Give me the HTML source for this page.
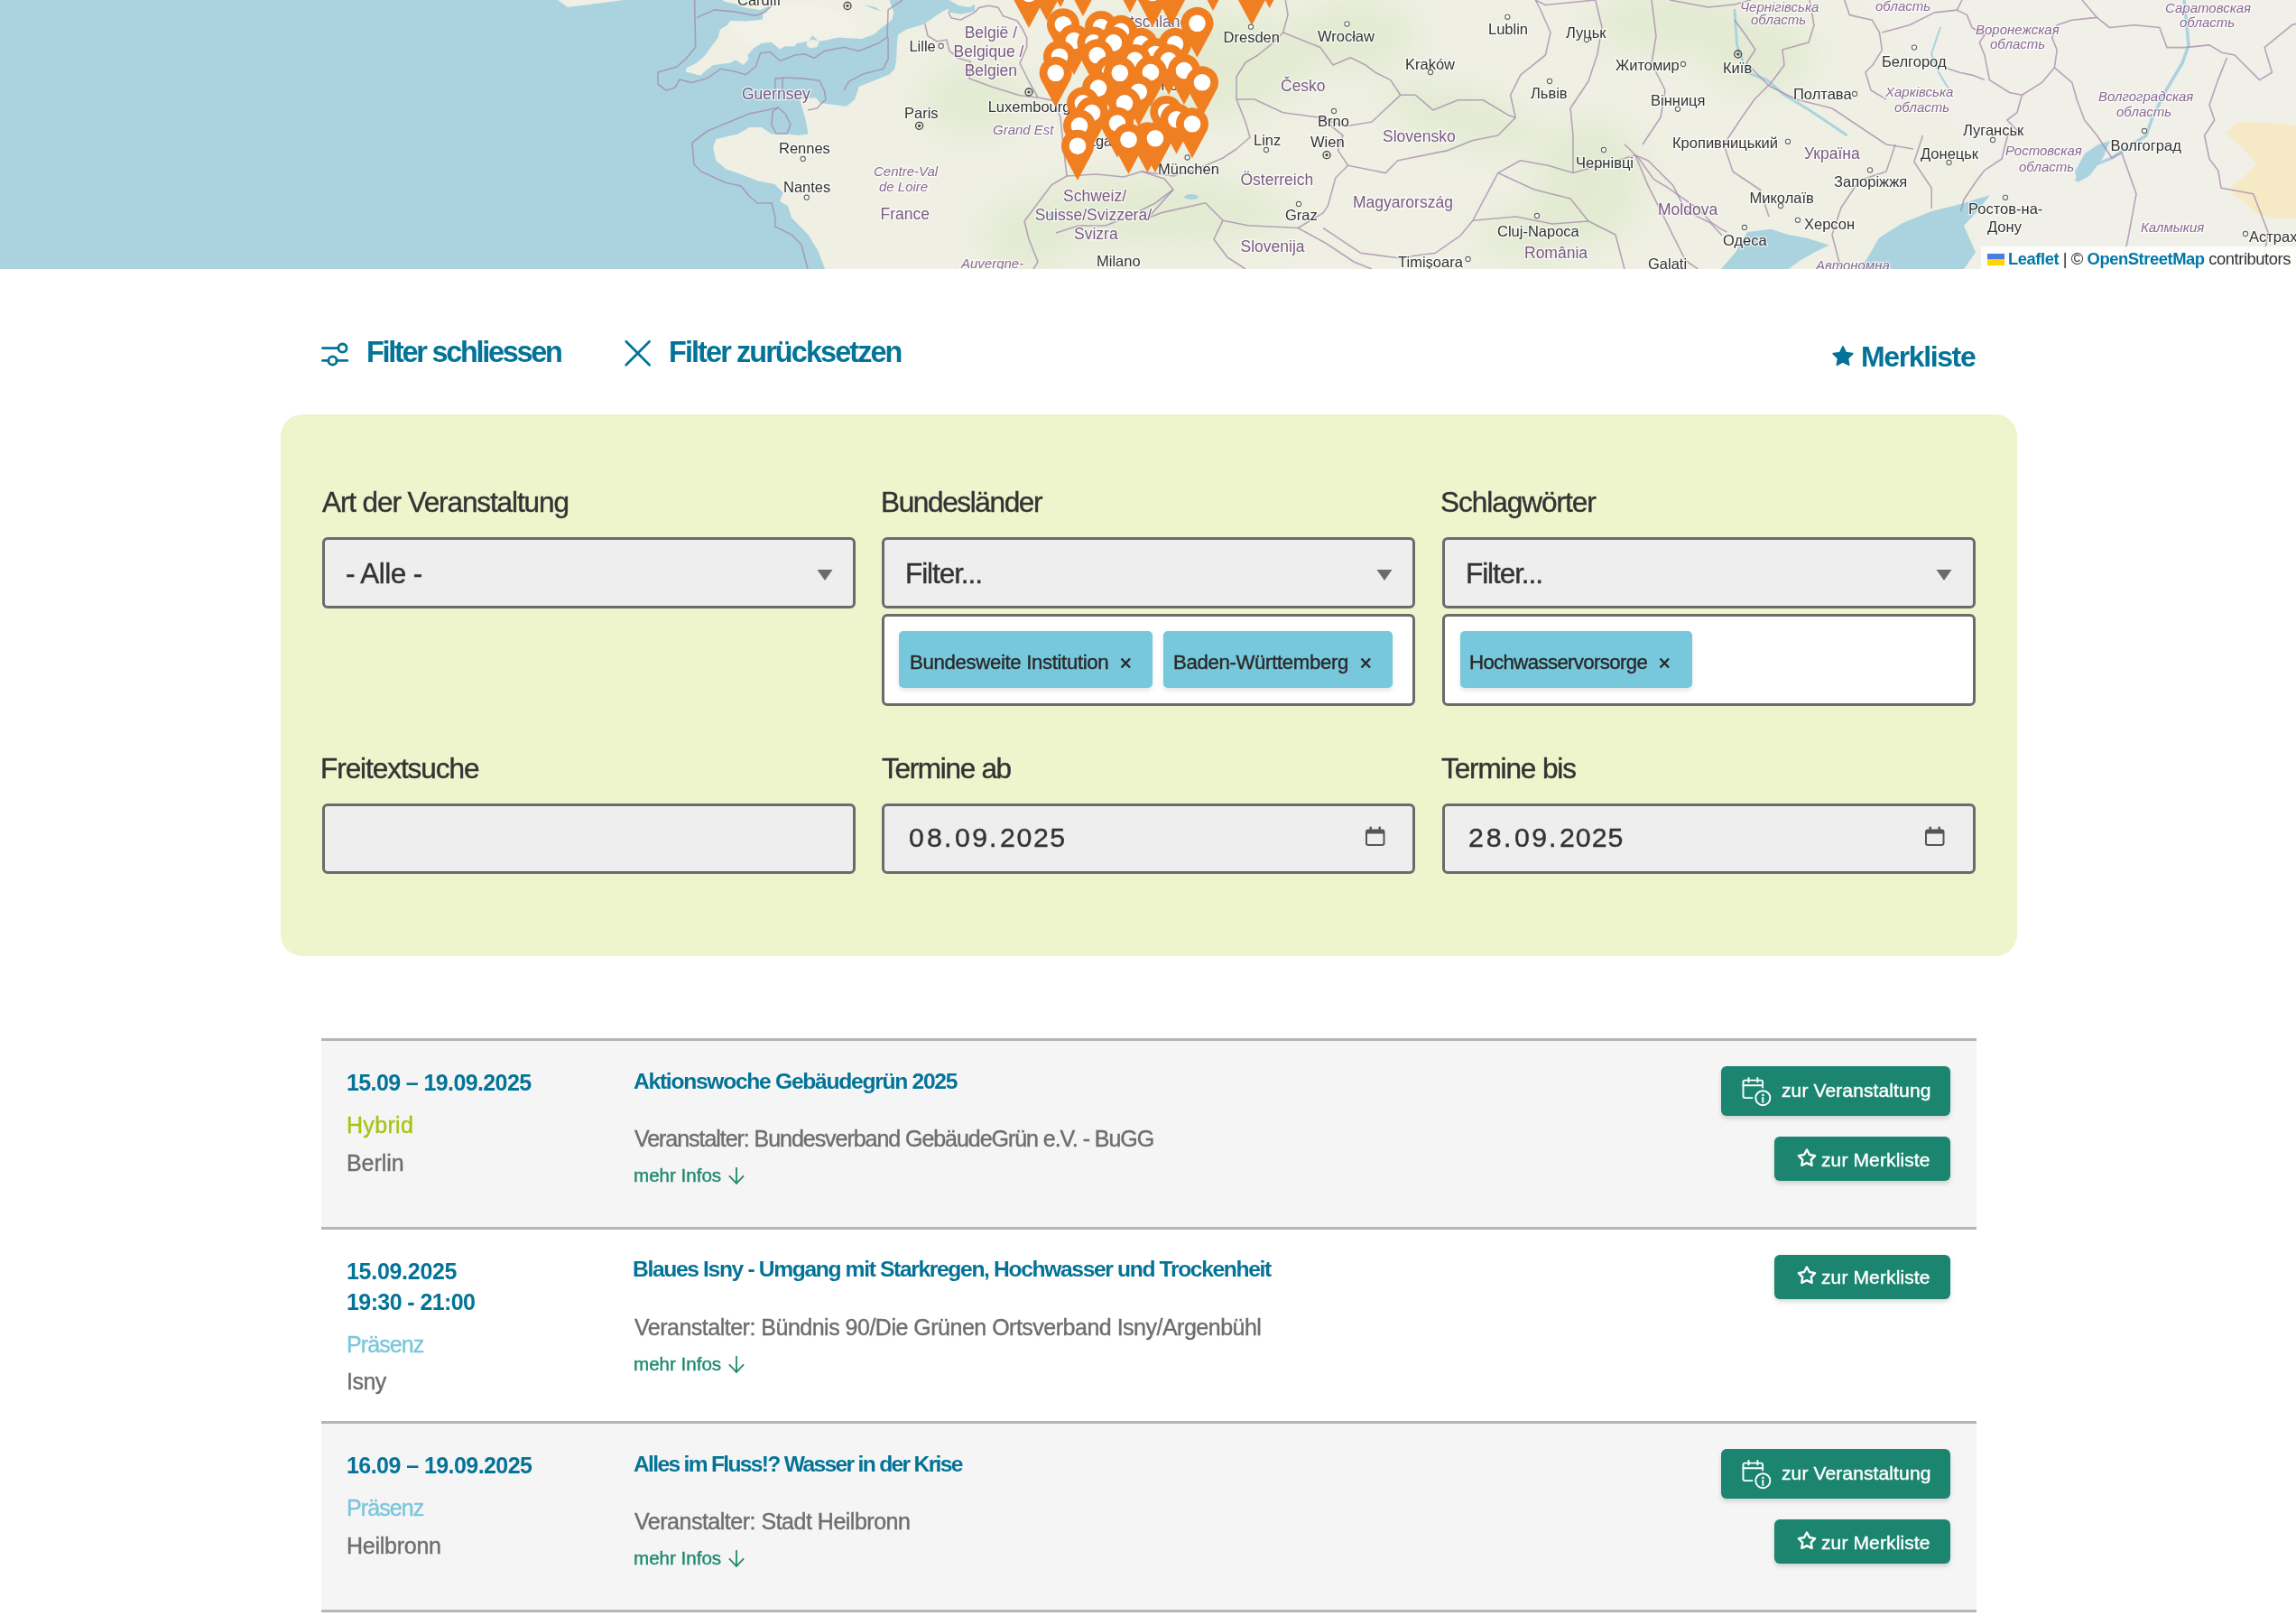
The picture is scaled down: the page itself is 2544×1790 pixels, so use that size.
<!DOCTYPE html>
<html lang="de"><head><meta charset="utf-8"><title>Veranstaltungen</title>
<style>
html,body{margin:0;padding:0}
body{width:2544px;height:1790px;overflow:hidden;background:#ffffff;position:relative;font-family:"Liberation Sans",sans-serif}
.t{position:absolute;white-space:pre;will-change:transform}
.box{position:absolute;box-sizing:border-box}
.inp{background:#eeeeee;border:3px solid #6b6b6b;border-radius:6px}
.tag{background:#77c8dc;border-radius:5px;box-shadow:0 3px 5px rgba(0,0,0,0.10)}
.btn{background:#1b8570;border-radius:6px;box-shadow:0 3px 5px rgba(0,0,0,0.15)}
</style></head><body>
<svg width="2544" height="298" viewBox="0 0 2544 298" style="position:absolute;left:0;top:0;display:block">
<rect width="2544" height="298" fill="#eff0e3"/>
<polygon points="2060.0,0.0 2544.0,0.0 2544.0,298.0 2170.0,298.0 2190.0,270.0 2180.0,240.0 2205.0,216.0 2170.0,150.0 2150.0,100.0 2100.0,40.0" fill="#f0efe8"/>
<defs><filter id="bl" x="-50%" y="-50%" width="200%" height="200%"><feGaussianBlur stdDeviation="18"/></filter></defs>
<g filter="url(#bl)" fill="#d9e6c4" opacity="0.55">
<ellipse cx="1330" cy="70" rx="120" ry="60"/>
<ellipse cx="1280" cy="235" rx="150" ry="40"/>
<ellipse cx="1620" cy="130" rx="90" ry="30" transform="rotate(15 1620 130)"/>
<ellipse cx="1760" cy="200" rx="60" ry="70"/>
<ellipse cx="1850" cy="25" rx="90" ry="35"/>
<ellipse cx="1500" cy="40" rx="70" ry="40"/>
<ellipse cx="1950" cy="60" rx="60" ry="40"/>
<ellipse cx="1080" cy="110" rx="60" ry="40"/>
<ellipse cx="1140" cy="260" rx="50" ry="40"/>
<ellipse cx="1700" cy="260" rx="60" ry="30"/>
</g>
<ellipse cx="880" cy="30" rx="70" ry="25" fill="#f2f1e8" opacity="0.9"/>
<polygon points="2466.5,147.0 2480.0,134.7 2505.0,136.0 2529.6,137.0 2544.0,139.6 2544.0,242.3 2517.3,242.3 2498.7,236.0 2486.3,223.8 2474.0,215.0 2471.5,206.4 2486.3,196.5 2500.0,182.0 2486.3,164.4 2474.0,155.7" fill="#f5e9c6"/>
<polygon points="0.0,0.0 618.0,0.0 629.0,8.0 660.0,4.0 691.0,0.0 800.0,0.0 804.4,2.2 815.3,4.4 826.2,8.7 842.6,10.9 854.5,5.4 857.0,3.0 855.6,4.4 845.8,15.2 844.7,21.8 826.2,23.4 808.8,22.9 806.6,27.2 797.9,32.7 795.7,41.4 786.0,54.4 781.6,61.0 771.8,69.7 760.9,75.1 759.8,79.5 764.2,80.6 776.1,83.8 780.5,79.5 790.3,71.9 808.8,69.7 815.3,66.4 824.0,71.9 829.5,65.3 828.4,61.0 835.0,53.4 843.6,47.9 854.5,46.8 864.3,54.4 869.8,51.2 880.7,51.2 882.8,47.9 895.9,45.7 900.3,39.2 906.8,45.7 915.5,44.6 928.6,41.4 954.7,43.1 968.2,38.3 975.8,31.6 988.3,22.0 990.2,13.4 986.4,2.9 985.4,0.0 1080.0,0.0 1080.0,12.5 1064.5,15.7 1051.0,13.6 1050.6,9.6 1042.9,13.4 1023.7,26.8 1004.6,32.6 995.0,38.3 994.0,47.9 993.1,67.1 991.2,76.7 985.4,82.4 971.0,88.2 951.9,95.8 947.1,110.2 937.5,117.9 908.7,114.0 904.0,108.3 886.0,109.5 892.0,130.0 895.6,148.5 884.5,150.0 873.0,148.5 855.0,148.5 843.6,141.0 830.6,141.0 817.7,148.5 793.5,154.0 790.0,163.0 793.5,178.0 804.7,187.5 821.0,193.0 840.0,200.5 858.5,204.0 867.8,213.5 864.0,223.0 873.0,228.0 877.0,241.0 895.6,260.0 906.8,278.5 914.0,298.0 0.0,298.0" fill="#aad3df"/>
<polygon points="893.7,47.0 900.0,43.6 907.9,46.0 905.0,52.0 898.0,53.4 894.0,51.0" fill="#eff0e3"/>
<polygon points="1052.0,0.0 1062.0,6.0 1075.0,8.0 1082.0,3.0 1083.0,0.0" fill="#eff0e3"/>
<polygon points="957.0,5.0 970.0,8.0 976.0,12.0 968.0,10.0" fill="#aad3df"/>
<polygon points="1907.0,298.0 1923.0,279.6 1936.0,257.0 1962.0,253.7 1981.5,260.0 2001.0,263.4 2027.0,271.5 2010.6,279.6 1994.0,289.0 1981.5,298.0" fill="#aad3df"/>
<polygon points="2069.0,286.0 2082.0,263.4 2108.0,247.0 2140.0,234.0 2172.6,226.0 2205.0,216.0 2189.0,236.0 2176.0,250.0 2189.0,279.6 2176.0,298.0 2085.0,298.0 2060.0,298.0" fill="#aad3df"/>
<path d="M2300,200 L2315,185 L2340,175 L2378,150 L2385,130 L2400,100 L2418,70 L2425,50 L2420,0" stroke="#aad3df" stroke-width="3.5" fill="none"/>
<polygon points="2299,190 2310,170 2325,160 2338,156 2330,175 2315,195 2302,202" fill="#aad3df"/>
<path d="M2150,30 L2140,60 L2148,80 L2160,100" stroke="#aad3df" stroke-width="2" fill="none"/>
<path d="M1921.9,10 L1924.6,50 L1935.7,80.3 L1957.9,88.6 L1977.3,105.3 L2005,121.9 L2046.5,150" stroke="#aad3df" stroke-width="3" fill="none"/>
<ellipse cx="1320" cy="218" rx="8" ry="3" fill="#aad3df"/><ellipse cx="1170" cy="238" rx="10" ry="3" fill="#aad3df"/>
<polyline points="1024.8,26.0 1028.0,39.7 1038.4,46.0 1048.8,44.0 1052.0,56.4 1062.4,64.8 1075.0,68.0 1074.0,87.0 1100.0,96.5 1130.0,105.8 1150.0,108.0 1167.0,111.4 1175.0,130.0 1178.0,160.0 1182.0,195.0" fill="none" stroke="#a58aab" stroke-width="1.6" stroke-opacity="0.75" stroke-linejoin="round"/>
<polyline points="1051.0,13.6 1054.0,20.0 1064.5,22.0 1080.0,13.6 1085.0,8.4 1096.0,6.3 1106.0,8.4 1111.6,17.8 1127.0,23.0 1132.5,31.4 1137.7,41.8 1137.7,52.3 1130.0,70.0 1140.0,90.0 1150.0,108.0" fill="none" stroke="#a58aab" stroke-width="1.6" stroke-opacity="0.75" stroke-linejoin="round"/>
<polyline points="1182.0,195.0 1165.0,205.0 1150.0,225.0 1135.0,245.0 1140.0,265.0 1150.0,290.0 1145.0,298.0" fill="none" stroke="#a58aab" stroke-width="1.6" stroke-opacity="0.75" stroke-linejoin="round"/>
<polyline points="1182.0,195.0 1215.0,193.0 1245.0,196.0 1265.0,190.0 1290.0,198.0 1300.0,210.0 1280.0,225.0 1250.0,240.0 1225.0,250.0 1195.0,250.0 1170.0,258.0" fill="none" stroke="#a58aab" stroke-width="1.6" stroke-opacity="0.75" stroke-linejoin="round"/>
<polyline points="1265.0,190.0 1300.0,195.0 1325.0,188.0 1355.0,175.0 1370.0,165.0 1385.0,152.0 1380.0,135.0 1370.0,110.0 1390.0,110.0 1421.6,124.7" fill="none" stroke="#a58aab" stroke-width="1.6" stroke-opacity="0.75" stroke-linejoin="round"/>
<polyline points="1272.0,241.4 1285.9,235.9 1335.7,224.8 1355.0,244.2 1382.8,249.7 1438.2,252.5 1466.0,235.9 1471.5,227.6 1479.8,197.0 1493.6,183.2 1482.5,166.6 1488.0,150.0 1463.0,130.2" fill="none" stroke="#a58aab" stroke-width="1.6" stroke-opacity="0.75" stroke-linejoin="round"/>
<polyline points="1300.0,210.0 1272.0,241.4" fill="none" stroke="#a58aab" stroke-width="1.6" stroke-opacity="0.75" stroke-linejoin="round"/>
<polyline points="1424.3,0.0 1427.0,16.6 1421.6,36.0 1435.4,41.6 1463.0,52.6 1477.0,72.0 1496.3,63.7 1513.0,72.0 1524.0,80.3 1540.7,88.6 1551.7,105.3 1568.4,105.3 1587.8,121.9 1615.5,110.8 1643.2,110.8 1670.9,127.4 1679.2,130.2" fill="none" stroke="#a58aab" stroke-width="1.6" stroke-opacity="0.75" stroke-linejoin="round"/>
<polyline points="1421.6,36.0 1407.7,49.9 1393.9,61.0 1380.0,69.3 1370.0,85.0 1370.0,110.0" fill="none" stroke="#a58aab" stroke-width="1.6" stroke-opacity="0.75" stroke-linejoin="round"/>
<polyline points="1421.6,124.7 1463.0,130.2 1490.0,140.0 1520.0,135.0 1551.7,105.3" fill="none" stroke="#a58aab" stroke-width="1.6" stroke-opacity="0.75" stroke-linejoin="round"/>
<polyline points="1679.2,130.2 1673.6,105.3 1684.7,83.1 1712.4,61.0 1718.0,36.0 1707.0,11.0 1701.3,0.0" fill="none" stroke="#a58aab" stroke-width="1.6" stroke-opacity="0.75" stroke-linejoin="round"/>
<polyline points="1701.3,0.0 1712.4,5.5 1767.8,0.0" fill="none" stroke="#a58aab" stroke-width="1.6" stroke-opacity="0.75" stroke-linejoin="round"/>
<polyline points="1850.0,0.0 1892.5,8.0 1922.0,5.0 1940.0,0.0" fill="none" stroke="#a58aab" stroke-width="1.6" stroke-opacity="0.75" stroke-linejoin="round"/>
<polyline points="1466.0,252.5 1507.5,280.2 1549.0,285.7 1590.6,280.2 1618.3,260.8 1632.0,244.2 1659.8,191.6 1684.7,177.7 1715.2,183.2 1743.0,191.6" fill="none" stroke="#a58aab" stroke-width="1.6" stroke-opacity="0.75" stroke-linejoin="round"/>
<polyline points="1493.6,183.2 1535.2,191.6 1549.0,177.7 1604.4,166.6 1632.0,155.5 1659.8,150.0 1679.2,130.2" fill="none" stroke="#a58aab" stroke-width="1.6" stroke-opacity="0.75" stroke-linejoin="round"/>
<polyline points="1743.0,191.6 1812.0,172.0 1826.0,177.7 1853.7,205.4 1867.6,233.1 1895.3,247.0 1908.0,260.8" fill="none" stroke="#a58aab" stroke-width="1.6" stroke-opacity="0.75" stroke-linejoin="round"/>
<polyline points="1800.0,159.7 1816.2,176.0 1832.4,198.6 1848.6,208.3 1881.0,231.0 1897.2,247.2 1907.0,253.7 1913.4,257.0" fill="none" stroke="#a58aab" stroke-width="1.6" stroke-opacity="0.75" stroke-linejoin="round"/>
<polyline points="1812.0,172.0 1826.0,205.4 1840.0,233.1 1853.7,260.8 1867.6,288.5 1881.4,298.0" fill="none" stroke="#a58aab" stroke-width="1.6" stroke-opacity="0.75" stroke-linejoin="round"/>
<polyline points="1632.0,244.2 1680.0,240.0 1720.0,248.0 1760.0,245.0 1790.0,260.0 1800.0,298.0" fill="none" stroke="#a58aab" stroke-width="1.6" stroke-opacity="0.75" stroke-linejoin="round"/>
<polyline points="1659.8,191.6 1700.0,210.0 1740.0,220.0 1760.0,245.0" fill="none" stroke="#a58aab" stroke-width="1.6" stroke-opacity="0.75" stroke-linejoin="round"/>
<polyline points="1355.0,244.2 1345.0,265.0 1360.0,285.0 1380.0,298.0" fill="none" stroke="#a58aab" stroke-width="1.6" stroke-opacity="0.75" stroke-linejoin="round"/>
<polyline points="1438.2,252.5 1470.0,270.0 1500.0,290.0 1520.0,298.0" fill="none" stroke="#a58aab" stroke-width="1.6" stroke-opacity="0.75" stroke-linejoin="round"/>
<polyline points="1767.8,0.0 1775.0,30.0 1770.0,60.0 1760.0,90.0 1740.0,120.0 1743.0,150.0 1743.0,191.6" fill="none" stroke="#a58aab" stroke-width="1.6" stroke-opacity="0.75" stroke-linejoin="round"/>
<polyline points="1830.0,0.0 1835.0,40.0 1830.0,70.0 1845.0,100.0 1840.0,130.0 1820.0,160.0" fill="none" stroke="#a58aab" stroke-width="1.6" stroke-opacity="0.75" stroke-linejoin="round"/>
<polyline points="1921.9,22.0 1935.0,40.0 1945.0,55.0 1935.0,70.0 1960.0,95.0 1990.0,110.0 2030.0,120.0 2060.0,140.0 2090.0,160.0 2120.0,165.0" fill="none" stroke="#a58aab" stroke-width="1.6" stroke-opacity="0.75" stroke-linejoin="round"/>
<polyline points="2005.0,0.0 2010.0,28.0 2004.0,47.0 1975.0,55.0 1977.0,72.0 1963.0,91.0 1944.0,110.0 1930.0,130.0 1910.0,160.0 1920.0,190.0 1950.0,210.0 1960.0,240.0" fill="none" stroke="#a58aab" stroke-width="1.6" stroke-opacity="0.75" stroke-linejoin="round"/>
<polyline points="2100.0,160.0 2090.0,190.0 2060.0,200.0 2040.0,230.0 2030.0,260.0 2040.0,299.0" fill="none" stroke="#a58aab" stroke-width="1.6" stroke-opacity="0.75" stroke-linejoin="round"/>
<polyline points="2043.7,0.0 2049.3,16.6 2074.2,22.2 2082.5,36.0 2085.3,55.4 2075.0,72.0 2067.0,80.0 2073.0,100.0 2090.0,110.0" fill="none" stroke="#a58aab" stroke-width="1.6" stroke-opacity="0.75" stroke-linejoin="round"/>
<polyline points="2085.3,36.0 2115.8,27.7 2143.5,13.9 2168.4,11.1 2179.5,16.6 2185.0,30.5 2198.9,38.8 2193.3,47.1 2198.9,61.0 2204.4,88.6 2226.6,102.5 2240.4,105.3 2234.9,124.7 2223.8,133.0 2240.4,149.6 2224.5,150.0 2218.0,176.0 2198.6,188.9 2188.9,201.8 2175.9,221.3 2172.6,234.3" fill="none" stroke="#a58aab" stroke-width="1.6" stroke-opacity="0.75" stroke-linejoin="round"/>
<polyline points="2154.5,74.8 2171.2,80.3 2185.0,83.1 2198.9,88.6" fill="none" stroke="#a58aab" stroke-width="1.6" stroke-opacity="0.75" stroke-linejoin="round"/>
<polyline points="2130.5,150.0 2120.8,179.2 2140.2,208.3 2140.2,231.0" fill="none" stroke="#a58aab" stroke-width="1.6" stroke-opacity="0.75" stroke-linejoin="round"/>
<polyline points="2168.4,11.0 2174.0,0.0" fill="none" stroke="#a58aab" stroke-width="1.6" stroke-opacity="0.75" stroke-linejoin="round"/>
<polyline points="2273.6,41.6 2279.2,55.4 2276.4,74.8 2262.5,91.4 2240.4,105.3" fill="none" stroke="#a58aab" stroke-width="1.6" stroke-opacity="0.75" stroke-linejoin="round"/>
<polyline points="2279.2,27.7 2295.8,22.2 2323.5,19.4 2337.4,30.5 2365.0,27.7 2392.8,30.5 2401.0,52.6 2420.5,52.6 2448.0,49.9 2462.0,58.2 2476.0,61.0 2503.6,88.6 2517.4,80.3 2509.1,52.6 2539.6,27.7 2544.0,26.3" fill="none" stroke="#a58aab" stroke-width="1.6" stroke-opacity="0.75" stroke-linejoin="round"/>
<polyline points="2276.4,74.8 2295.8,91.4 2301.3,110.8 2309.7,133.0 2323.5,150.0 2340.0,175.0 2350.9,169.4 2367.0,214.8 2357.4,266.7 2350.0,298.0" fill="none" stroke="#a58aab" stroke-width="1.6" stroke-opacity="0.75" stroke-linejoin="round"/>
<polyline points="2467.5,63.7 2456.5,91.4 2448.0,116.3 2453.7,133.0 2442.6,150.0 2448.0,176.0 2457.8,188.9 2461.0,208.3 2496.7,214.8 2513.0,257.0 2506.4,298.0" fill="none" stroke="#a58aab" stroke-width="1.6" stroke-opacity="0.75" stroke-linejoin="round"/>
<polyline points="2307.0,0.0 2323.5,19.4" fill="none" stroke="#a58aab" stroke-width="1.6" stroke-opacity="0.75" stroke-linejoin="round"/>
<polyline points="2279.2,27.7 2273.6,41.6" fill="none" stroke="#a58aab" stroke-width="1.6" stroke-opacity="0.75" stroke-linejoin="round"/>
<polyline points="769.6,0.0 770.7,52.3 760.9,64.2 750.0,74.0 729.0,80.0 729.0,93.0 738.0,100.0 748.0,97.0 753.0,88.0 766.3,91.5 782.7,87.1 799.0,76.2 815.3,79.5 826.2,82.8 837.1,74.0 842.6,58.8 853.4,57.7 864.3,67.5 880.7,61.0 891.6,59.9 902.4,64.2 913.3,56.6 935.1,52.3 951.4,56.6 973.2,47.9 983.0,41.4 984.1,10.9 1000.0,0.0" fill="none" stroke="#a58aab" stroke-width="1.6" stroke-opacity="0.75" stroke-linejoin="round"/>
<polyline points="771.8,19.6 791.4,10.9 815.3,13.1 837.1,17.4 848.0,13.1 856.7,4.4" fill="none" stroke="#a58aab" stroke-width="1.6" stroke-opacity="0.75" stroke-linejoin="round"/>
<polyline points="858.9,100.0 858.9,87.1 869.8,86.0 891.6,87.1 907.9,89.3 913.3,100.0 915.0,110.0 905.0,120.0 895.0,122.0" fill="none" stroke="#a58aab" stroke-width="1.6" stroke-opacity="0.75" stroke-linejoin="round"/>
<polyline points="867.0,86.0 867.0,100.0" fill="none" stroke="#a58aab" stroke-width="1.6" stroke-opacity="0.75" stroke-linejoin="round"/>
<polyline points="935.0,100.0 940.5,90.4 956.9,81.7 978.7,76.2 984.1,65.3 984.0,41.0" fill="none" stroke="#a58aab" stroke-width="1.6" stroke-opacity="0.75" stroke-linejoin="round"/>
<polyline points="863.0,119.0 850.0,122.0 830.0,126.0 784.0,145.0 767.0,158.0 769.0,182.0 777.0,190.0 803.0,202.0 821.0,206.0 830.0,217.0 839.0,225.0 855.0,225.0 859.0,241.0 859.0,251.0 877.0,260.0 888.0,271.0 895.0,298.0" fill="none" stroke="#a58aab" stroke-width="1.6" stroke-opacity="0.75" stroke-linejoin="round"/>
<polyline points="862.0,119.0 870.0,126.0 876.0,138.0 872.0,148.0 860.0,148.0 855.0,138.0 856.0,124.0 862.0,119.0" fill="none" stroke="#a58aab" stroke-width="1.6" stroke-opacity="0.75" stroke-linejoin="round"/>
<g font-family="Liberation Sans, sans-serif" paint-order="stroke" stroke="#ffffff" stroke-opacity="0.7" stroke-width="2.5">
<text x="817" y="6" font-size="16.5" fill="#333">Cardiff</text>
<text x="822" y="110" font-size="17.5" fill="#7a5a82">Guernsey</text>
<text x="863" y="170" font-size="16.5" fill="#333">Rennes</text>
<text x="868" y="212.6" font-size="16.5" fill="#333">Nantes</text>
<text x="968" y="195" font-size="15" fill="#8a6a92" font-style="italic">Centre-Val</text>
<text x="974" y="212" font-size="15" fill="#8a6a92" font-style="italic">de Loire</text>
<text x="975.5" y="243" font-size="17.5" fill="#7a5a82">France</text>
<text x="1068.7" y="41.8" font-size="17.5" fill="#7a5a82">België /</text>
<text x="1056.6" y="63" font-size="17.5" fill="#7a5a82">Belgique /</text>
<text x="1068.7" y="84" font-size="17.5" fill="#7a5a82">Belgien</text>
<text x="1007.4" y="56.6" font-size="16.5" fill="#333">Lille</text>
<text x="1002" y="131" font-size="16.5" fill="#333">Paris</text>
<text x="1094.7" y="123.5" font-size="16.5" fill="#333">Luxembourg</text>
<text x="1100" y="148.5" font-size="15" fill="#8a6a92" font-style="italic">Grand Est</text>
<text x="1178" y="222.8" font-size="17.5" fill="#7a5a82">Schweiz/</text>
<text x="1146.7" y="244" font-size="17.5" fill="#7a5a82">Suisse/Svizzera/</text>
<text x="1190" y="265" font-size="17.5" fill="#7a5a82">Svizra</text>
<text x="1215" y="295" font-size="16.5" fill="#333">Milano</text>
<text x="1283" y="193" font-size="16.5" fill="#333">München</text>
<text x="1355.6" y="47" font-size="16.5" fill="#333">Dresden</text>
<text x="1220" y="30" font-size="17.5" fill="#7a5a82">Deutschland</text>
<text x="1180" y="162" font-size="16.5" fill="#333">Stuttgart</text>
<text x="1260" y="100" font-size="16.5" fill="#333">Nürnberg</text>
<text x="1290" y="140" font-size="15" fill="#8a6a92" font-style="italic">Bayern</text>
<text x="1389" y="160.5" font-size="16.5" fill="#333">Linz</text>
<text x="1065" y="297" font-size="15" fill="#8a6a92" font-style="italic">Auvergne-</text>
<text x="1460" y="46" font-size="16.5" fill="#333">Wrocław</text>
<text x="1649" y="38" font-size="16.5" fill="#333">Lublin</text>
<text x="1735" y="42" font-size="16.5" fill="#333">Луцьк</text>
<text x="1557" y="77" font-size="16.5" fill="#333">Kraków</text>
<text x="1790" y="78" font-size="16.5" fill="#333">Житомир</text>
<text x="1909" y="81" font-size="16.5" fill="#333">Київ</text>
<text x="2085" y="74" font-size="16.5" fill="#333">Белгород</text>
<text x="1928" y="13" font-size="15" fill="#8a6a92" font-style="italic">Чернігівська</text>
<text x="1940" y="27" font-size="15" fill="#8a6a92" font-style="italic">область</text>
<text x="2078" y="12" font-size="15" fill="#8a6a92" font-style="italic">область</text>
<text x="2189" y="38" font-size="15" fill="#8a6a92" font-style="italic">Воронежская</text>
<text x="2205" y="54" font-size="15" fill="#8a6a92" font-style="italic">область</text>
<text x="2399" y="14" font-size="15" fill="#8a6a92" font-style="italic">Саратовская</text>
<text x="2415" y="30" font-size="15" fill="#8a6a92" font-style="italic">область</text>
<text x="1419" y="101" font-size="17.5" fill="#7a5a82">Česko</text>
<text x="1460" y="140" font-size="16.5" fill="#333">Brno</text>
<text x="1452" y="163" font-size="16.5" fill="#333">Wien</text>
<text x="1532" y="157" font-size="17.5" fill="#7a5a82">Slovensko</text>
<text x="1374.5" y="205" font-size="17.5" fill="#7a5a82">Österreich</text>
<text x="1424" y="244" font-size="16.5" fill="#333">Graz</text>
<text x="1499" y="230" font-size="17.5" fill="#7a5a82">Magyarország</text>
<text x="1374.5" y="279" font-size="17.5" fill="#7a5a82">Slovenija</text>
<text x="1696" y="109" font-size="16.5" fill="#333">Львів</text>
<text x="1829" y="117" font-size="16.5" fill="#333">Вінниця</text>
<text x="1987" y="110" font-size="16.5" fill="#333">Полтава</text>
<text x="2089" y="107" font-size="15" fill="#8a6a92" font-style="italic">Харківська</text>
<text x="2099" y="124" font-size="15" fill="#8a6a92" font-style="italic">область</text>
<text x="2325" y="112" font-size="15" fill="#8a6a92" font-style="italic">Волгоградская</text>
<text x="2345" y="129" font-size="15" fill="#8a6a92" font-style="italic">область</text>
<text x="2175" y="150" font-size="16.5" fill="#333">Луганськ</text>
<text x="1853" y="164" font-size="16.5" fill="#333">Кропивницький</text>
<text x="1999" y="176" font-size="17.5" fill="#7a5a82">Україна</text>
<text x="2128" y="176" font-size="16.5" fill="#333">Донецьк</text>
<text x="2222" y="172" font-size="15" fill="#8a6a92" font-style="italic">Ростовская</text>
<text x="2237" y="190" font-size="15" fill="#8a6a92" font-style="italic">область</text>
<text x="2338.5" y="167" font-size="16.5" fill="#333">Волгоград</text>
<text x="1746" y="186" font-size="16.5" fill="#333">Чернівці</text>
<text x="2032" y="207" font-size="16.5" fill="#333">Запоріжжя</text>
<text x="1837" y="238" font-size="17.5" fill="#7a5a82">Moldova</text>
<text x="1938.5" y="225" font-size="16.5" fill="#333">Миколаїв</text>
<text x="1659" y="262" font-size="16.5" fill="#333">Cluj-Napoca</text>
<text x="1999" y="254" font-size="16.5" fill="#333">Херсон</text>
<text x="2181" y="237" font-size="16.5" fill="#333">Ростов-на-</text>
<text x="2202" y="257" font-size="16.5" fill="#333">Дону</text>
<text x="1689" y="286" font-size="17.5" fill="#7a5a82">România</text>
<text x="1549" y="295.5" font-size="16.5" fill="#333">Timișoara</text>
<text x="1826" y="298" font-size="16.5" fill="#333">Galați</text>
<text x="1909" y="272" font-size="16.5" fill="#333">Одеса</text>
<text x="2372" y="257" font-size="15" fill="#8a6a92" font-style="italic">Калмыкия</text>
<text x="2492" y="268" font-size="16.5" fill="#333">Астрах</text>
<text x="2012" y="299" font-size="15" fill="#8a6a92" font-style="italic">Автономна</text>
</g>
<circle cx="939" cy="6.5" r="4" fill="none" stroke="#444" stroke-width="1.3"/><circle cx="939" cy="6.5" r="1.6" fill="#444"/>
<circle cx="889.7" cy="176" r="2.6" fill="#fff" stroke="#666" stroke-width="1.1"/>
<circle cx="893.8" cy="218.7" r="2.6" fill="#fff" stroke="#666" stroke-width="1.1"/>
<circle cx="1042.7" cy="51" r="2.6" fill="#fff" stroke="#666" stroke-width="1.1"/>
<circle cx="1018.6" cy="139.3" r="4" fill="none" stroke="#444" stroke-width="1.3"/><circle cx="1018.6" cy="139.3" r="1.6" fill="#444"/>
<circle cx="1140" cy="102" r="4" fill="none" stroke="#444" stroke-width="1.3"/><circle cx="1140" cy="102" r="1.6" fill="#444"/>
<circle cx="1315.6" cy="174.5" r="2.6" fill="#fff" stroke="#666" stroke-width="1.1"/>
<circle cx="1386" cy="29.7" r="2.6" fill="#fff" stroke="#666" stroke-width="1.1"/>
<circle cx="1403" cy="166" r="2.6" fill="#fff" stroke="#666" stroke-width="1.1"/>
<circle cx="1492.5" cy="26.6" r="2.6" fill="#fff" stroke="#666" stroke-width="1.1"/>
<circle cx="1670.3" cy="18.8" r="2.6" fill="#fff" stroke="#666" stroke-width="1.1"/>
<circle cx="1758" cy="44" r="2.6" fill="#fff" stroke="#666" stroke-width="1.1"/>
<circle cx="1585" cy="80" r="2.6" fill="#fff" stroke="#666" stroke-width="1.1"/>
<circle cx="1865" cy="71" r="2.6" fill="#fff" stroke="#666" stroke-width="1.1"/>
<circle cx="1925.7" cy="60" r="4" fill="none" stroke="#444" stroke-width="1.3"/><circle cx="1925.7" cy="60" r="1.6" fill="#444"/>
<circle cx="2121" cy="52.6" r="2.6" fill="#fff" stroke="#666" stroke-width="1.1"/>
<circle cx="1478" cy="123" r="2.6" fill="#fff" stroke="#666" stroke-width="1.1"/>
<circle cx="1470" cy="171.7" r="4" fill="none" stroke="#444" stroke-width="1.3"/><circle cx="1470" cy="171.7" r="1.6" fill="#444"/>
<circle cx="1439" cy="226" r="2.6" fill="#fff" stroke="#666" stroke-width="1.1"/>
<circle cx="1717" cy="90" r="2.6" fill="#fff" stroke="#666" stroke-width="1.1"/>
<circle cx="1859" cy="120.8" r="2.6" fill="#fff" stroke="#666" stroke-width="1.1"/>
<circle cx="2055" cy="104" r="2.6" fill="#fff" stroke="#666" stroke-width="1.1"/>
<circle cx="2208" cy="155" r="2.6" fill="#fff" stroke="#666" stroke-width="1.1"/>
<circle cx="1981" cy="156.8" r="2.6" fill="#fff" stroke="#666" stroke-width="1.1"/>
<circle cx="2159.5" cy="180" r="2.6" fill="#fff" stroke="#666" stroke-width="1.1"/>
<circle cx="2376" cy="145" r="2.6" fill="#fff" stroke="#666" stroke-width="1.1"/>
<circle cx="1777" cy="166" r="2.6" fill="#fff" stroke="#666" stroke-width="1.1"/>
<circle cx="2072" cy="188.4" r="2.6" fill="#fff" stroke="#666" stroke-width="1.1"/>
<circle cx="1973" cy="228" r="2.6" fill="#fff" stroke="#666" stroke-width="1.1"/>
<circle cx="1703" cy="239" r="2.6" fill="#fff" stroke="#666" stroke-width="1.1"/>
<circle cx="1992" cy="243.8" r="2.6" fill="#fff" stroke="#666" stroke-width="1.1"/>
<circle cx="2222" cy="218.8" r="2.6" fill="#fff" stroke="#666" stroke-width="1.1"/>
<circle cx="1626.6" cy="287" r="2.6" fill="#fff" stroke="#666" stroke-width="1.1"/>
<circle cx="1932.9" cy="252" r="2.6" fill="#fff" stroke="#666" stroke-width="1.1"/>
<circle cx="2488" cy="259" r="2.6" fill="#fff" stroke="#666" stroke-width="1.1"/>
<g transform="translate(1175,-30)"><path d="M0,38.0 L-15.85,8.53 A18.0,18.0 0 1 1 15.85,8.53 Z" fill="#f07f22"/><circle r="9.3" fill="#fff"/></g>
<g transform="translate(1406.6,-29)"><path d="M0,38.0 L-15.85,8.53 A18.0,18.0 0 1 1 15.85,8.53 Z" fill="#f07f22"/><circle r="9.3" fill="#fff"/></g>
<g transform="translate(1344,-26)"><path d="M0,38.0 L-15.85,8.53 A18.0,18.0 0 1 1 15.85,8.53 Z" fill="#f07f22"/><circle r="9.3" fill="#fff"/></g>
<g transform="translate(1252,-24)"><path d="M0,38.0 L-15.85,8.53 A18.0,18.0 0 1 1 15.85,8.53 Z" fill="#f07f22"/><circle r="9.3" fill="#fff"/></g>
<g transform="translate(1200,-20)"><path d="M0,38.0 L-15.85,8.53 A18.0,18.0 0 1 1 15.85,8.53 Z" fill="#f07f22"/><circle r="9.3" fill="#fff"/></g>
<g transform="translate(1160,-15)"><path d="M0,38.0 L-15.85,8.53 A18.0,18.0 0 1 1 15.85,8.53 Z" fill="#f07f22"/><circle r="9.3" fill="#fff"/></g>
<g transform="translate(1298,-10)"><path d="M0,38.0 L-15.85,8.53 A18.0,18.0 0 1 1 15.85,8.53 Z" fill="#f07f22"/><circle r="9.3" fill="#fff"/></g>
<g transform="translate(1387,-10)"><path d="M0,38.0 L-15.85,8.53 A18.0,18.0 0 1 1 15.85,8.53 Z" fill="#f07f22"/><circle r="9.3" fill="#fff"/></g>
<g transform="translate(1277,-8)"><path d="M0,38.0 L-15.85,8.53 A18.0,18.0 0 1 1 15.85,8.53 Z" fill="#f07f22"/><circle r="9.3" fill="#fff"/></g>
<g transform="translate(1140,-7)"><path d="M0,38.0 L-15.85,8.53 A18.0,18.0 0 1 1 15.85,8.53 Z" fill="#f07f22"/><circle r="9.3" fill="#fff"/></g>
<g transform="translate(1326.5,25.8)"><path d="M0,38.0 L-15.85,8.53 A18.0,18.0 0 1 1 15.85,8.53 Z" fill="#f07f22"/><circle r="9.3" fill="#fff"/></g>
<g transform="translate(1178,27.2)"><path d="M0,38.0 L-15.85,8.53 A18.0,18.0 0 1 1 15.85,8.53 Z" fill="#f07f22"/><circle r="9.3" fill="#fff"/></g>
<g transform="translate(1220,30)"><path d="M0,38.0 L-15.85,8.53 A18.0,18.0 0 1 1 15.85,8.53 Z" fill="#f07f22"/><circle r="9.3" fill="#fff"/></g>
<g transform="translate(1242,34.8)"><path d="M0,38.0 L-15.85,8.53 A18.0,18.0 0 1 1 15.85,8.53 Z" fill="#f07f22"/><circle r="9.3" fill="#fff"/></g>
<g transform="translate(1190,45)"><path d="M0,38.0 L-15.85,8.53 A18.0,18.0 0 1 1 15.85,8.53 Z" fill="#f07f22"/><circle r="9.3" fill="#fff"/></g>
<g transform="translate(1211.5,47.4)"><path d="M0,38.0 L-15.85,8.53 A18.0,18.0 0 1 1 15.85,8.53 Z" fill="#f07f22"/><circle r="9.3" fill="#fff"/></g>
<g transform="translate(1233.8,47.4)"><path d="M0,38.0 L-15.85,8.53 A18.0,18.0 0 1 1 15.85,8.53 Z" fill="#f07f22"/><circle r="9.3" fill="#fff"/></g>
<g transform="translate(1264.5,48.8)"><path d="M0,38.0 L-15.85,8.53 A18.0,18.0 0 1 1 15.85,8.53 Z" fill="#f07f22"/><circle r="9.3" fill="#fff"/></g>
<g transform="translate(1302,48.8)"><path d="M0,38.0 L-15.85,8.53 A18.0,18.0 0 1 1 15.85,8.53 Z" fill="#f07f22"/><circle r="9.3" fill="#fff"/></g>
<g transform="translate(1280,60)"><path d="M0,38.0 L-15.85,8.53 A18.0,18.0 0 1 1 15.85,8.53 Z" fill="#f07f22"/><circle r="9.3" fill="#fff"/></g>
<g transform="translate(1215.7,61.3)"><path d="M0,38.0 L-15.85,8.53 A18.0,18.0 0 1 1 15.85,8.53 Z" fill="#f07f22"/><circle r="9.3" fill="#fff"/></g>
<g transform="translate(1174,62.7)"><path d="M0,38.0 L-15.85,8.53 A18.0,18.0 0 1 1 15.85,8.53 Z" fill="#f07f22"/><circle r="9.3" fill="#fff"/></g>
<g transform="translate(1257.5,66.9)"><path d="M0,38.0 L-15.85,8.53 A18.0,18.0 0 1 1 15.85,8.53 Z" fill="#f07f22"/><circle r="9.3" fill="#fff"/></g>
<g transform="translate(1295,67)"><path d="M0,38.0 L-15.85,8.53 A18.0,18.0 0 1 1 15.85,8.53 Z" fill="#f07f22"/><circle r="9.3" fill="#fff"/></g>
<g transform="translate(1312,78)"><path d="M0,38.0 L-15.85,8.53 A18.0,18.0 0 1 1 15.85,8.53 Z" fill="#f07f22"/><circle r="9.3" fill="#fff"/></g>
<g transform="translate(1230,80)"><path d="M0,38.0 L-15.85,8.53 A18.0,18.0 0 1 1 15.85,8.53 Z" fill="#f07f22"/><circle r="9.3" fill="#fff"/></g>
<g transform="translate(1275,80)"><path d="M0,38.0 L-15.85,8.53 A18.0,18.0 0 1 1 15.85,8.53 Z" fill="#f07f22"/><circle r="9.3" fill="#fff"/></g>
<g transform="translate(1169.7,80.8)"><path d="M0,38.0 L-15.85,8.53 A18.0,18.0 0 1 1 15.85,8.53 Z" fill="#f07f22"/><circle r="9.3" fill="#fff"/></g>
<g transform="translate(1240.8,80.8)"><path d="M0,38.0 L-15.85,8.53 A18.0,18.0 0 1 1 15.85,8.53 Z" fill="#f07f22"/><circle r="9.3" fill="#fff"/></g>
<g transform="translate(1332,91.3)"><path d="M0,38.0 L-15.85,8.53 A18.0,18.0 0 1 1 15.85,8.53 Z" fill="#f07f22"/><circle r="9.3" fill="#fff"/></g>
<g transform="translate(1217,97.6)"><path d="M0,38.0 L-15.85,8.53 A18.0,18.0 0 1 1 15.85,8.53 Z" fill="#f07f22"/><circle r="9.3" fill="#fff"/></g>
<g transform="translate(1261.7,101.7)"><path d="M0,38.0 L-15.85,8.53 A18.0,18.0 0 1 1 15.85,8.53 Z" fill="#f07f22"/><circle r="9.3" fill="#fff"/></g>
<g transform="translate(1246,114.3)"><path d="M0,38.0 L-15.85,8.53 A18.0,18.0 0 1 1 15.85,8.53 Z" fill="#f07f22"/><circle r="9.3" fill="#fff"/></g>
<g transform="translate(1200,114.3)"><path d="M0,38.0 L-15.85,8.53 A18.0,18.0 0 1 1 15.85,8.53 Z" fill="#f07f22"/><circle r="9.3" fill="#fff"/></g>
<g transform="translate(1292.3,124)"><path d="M0,38.0 L-15.85,8.53 A18.0,18.0 0 1 1 15.85,8.53 Z" fill="#f07f22"/><circle r="9.3" fill="#fff"/></g>
<g transform="translate(1210,125)"><path d="M0,38.0 L-15.85,8.53 A18.0,18.0 0 1 1 15.85,8.53 Z" fill="#f07f22"/><circle r="9.3" fill="#fff"/></g>
<g transform="translate(1303.5,132.4)"><path d="M0,38.0 L-15.85,8.53 A18.0,18.0 0 1 1 15.85,8.53 Z" fill="#f07f22"/><circle r="9.3" fill="#fff"/></g>
<g transform="translate(1238,136.6)"><path d="M0,38.0 L-15.85,8.53 A18.0,18.0 0 1 1 15.85,8.53 Z" fill="#f07f22"/><circle r="9.3" fill="#fff"/></g>
<g transform="translate(1321,137.3)"><path d="M0,38.0 L-15.85,8.53 A18.0,18.0 0 1 1 15.85,8.53 Z" fill="#f07f22"/><circle r="9.3" fill="#fff"/></g>
<g transform="translate(1196,139.4)"><path d="M0,38.0 L-15.85,8.53 A18.0,18.0 0 1 1 15.85,8.53 Z" fill="#f07f22"/><circle r="9.3" fill="#fff"/></g>
<g transform="translate(1271.4,153.3)"><path d="M0,38.0 L-15.85,8.53 A18.0,18.0 0 1 1 15.85,8.53 Z" fill="#f07f22"/><circle r="9.3" fill="#fff"/></g>
<g transform="translate(1280,153.3)"><path d="M0,38.0 L-15.85,8.53 A18.0,18.0 0 1 1 15.85,8.53 Z" fill="#f07f22"/><circle r="9.3" fill="#fff"/></g>
<g transform="translate(1250.5,154.7)"><path d="M0,38.0 L-15.85,8.53 A18.0,18.0 0 1 1 15.85,8.53 Z" fill="#f07f22"/><circle r="9.3" fill="#fff"/></g>
<g transform="translate(1194,161.7)"><path d="M0,38.0 L-15.85,8.53 A18.0,18.0 0 1 1 15.85,8.53 Z" fill="#f07f22"/><circle r="9.3" fill="#fff"/></g>
</svg>
<div style="position:absolute;left:2195px;top:273px;width:349px;height:25px;background:rgba(255,255,255,0.85)"></div>
<svg style="position:absolute;left:2202px;top:280.5px" width="19" height="13"><rect width="20" height="6.5" fill="#4C7BE1"/><rect y="6.5" width="20" height="6.5" fill="#FFD500"/></svg>
<div class="t" style="left:2225px;top:277.7px;font-size:18.4px;line-height:18.4px;letter-spacing:-0.45px;color:#333"><span style="color:#0078a8;font-weight:bold">Leaflet</span> | © <span style="color:#0078a8;font-weight:bold">OpenStreetMap</span> contributors</div>
<svg style="position:absolute;left:350px;top:370px" width="50" height="45" viewBox="350 370 50 45">
<g stroke="#037397" stroke-width="2.8" fill="none" stroke-linecap="round">
<line x1="357.5" y1="385.6" x2="374.9" y2="385.6"/><circle cx="379.5" cy="385.6" r="4.6"/>
<line x1="357.5" y1="399.4" x2="363.9" y2="399.4"/><circle cx="368.5" cy="399.4" r="4.6"/><line x1="373.1" y1="399.4" x2="384.8" y2="399.4"/>
</g></svg>
<svg style="position:absolute;left:685px;top:370px" width="45" height="42" viewBox="685 370 45 42">
<g stroke="#037397" stroke-width="2.7" stroke-linecap="round"><line x1="693.7" y1="378.2" x2="719.6" y2="404.2"/><line x1="719.6" y1="378.2" x2="693.7" y2="404.2"/></g></svg>
<svg style="position:absolute;left:2025px;top:375px" width="35" height="35" viewBox="2025 375 35 35">
<polygon points="2042.00,384.00 2045.29,390.67 2052.65,391.74 2047.33,396.93 2048.58,404.26 2042.00,400.80 2035.42,404.26 2036.67,396.93 2031.35,391.74 2038.71,390.67" fill="#037397" stroke="#037397" stroke-width="1.8" stroke-linejoin="round"/></svg>
<div class="box" style="left:311px;top:459px;width:1924px;height:600px;background:#eef5cd;border-radius:24px"></div>
<div class="box inp" style="left:357px;top:595px;width:591px;height:78.5px"></div>
<div class="box inp" style="left:357px;top:890px;width:591px;height:78px"></div>
<div class="box inp" style="left:977px;top:595px;width:591px;height:78.5px"></div>
<div class="box inp" style="left:977px;top:890px;width:591px;height:78px"></div>
<div class="box inp" style="left:1598px;top:595px;width:591px;height:78.5px"></div>
<div class="box inp" style="left:1598px;top:890px;width:591px;height:78px"></div>
<div class="box inp" style="left:977px;top:680px;width:591px;height:101.5px;background:#fff"></div>
<div class="box inp" style="left:1598px;top:680px;width:591px;height:101.5px;background:#fff"></div>
<svg style="position:absolute;left:905px;top:630px" width="18" height="14"><polygon points="0.5,1 17.5,1 9,13" fill="#6b6b6b"/></svg>
<svg style="position:absolute;left:1524.5px;top:630px" width="18" height="14"><polygon points="0.5,1 17.5,1 9,13" fill="#6b6b6b"/></svg>
<svg style="position:absolute;left:2145px;top:630px" width="18" height="14"><polygon points="0.5,1 17.5,1 9,13" fill="#6b6b6b"/></svg>
<svg style="position:absolute;left:1511.3px;top:912px" width="26" height="28" viewBox="-2 -3 26 28">
<rect x="1" y="4.5" width="19.5" height="16.5" rx="2.2" fill="none" stroke="#555" stroke-width="2"/>
<rect x="1" y="4" width="19.5" height="4.5" fill="#555"/><rect x="4.5" y="0.5" width="2.4" height="5" rx="1" fill="#555"/><rect x="14.5" y="0.5" width="2.4" height="5" rx="1" fill="#555"/></svg>
<svg style="position:absolute;left:2131.3px;top:912px" width="26" height="28" viewBox="-2 -3 26 28">
<rect x="1" y="4.5" width="19.5" height="16.5" rx="2.2" fill="none" stroke="#555" stroke-width="2"/>
<rect x="1" y="4" width="19.5" height="4.5" fill="#555"/><rect x="4.5" y="0.5" width="2.4" height="5" rx="1" fill="#555"/><rect x="14.5" y="0.5" width="2.4" height="5" rx="1" fill="#555"/></svg>
<div class="box tag" style="left:996px;top:699.2px;width:281px;height:63px"></div>
<div class="box tag" style="left:1289px;top:699.2px;width:253.5999999999999px;height:63px"></div>
<div class="box tag" style="left:1617.6px;top:699.2px;width:257.10000000000014px;height:63px"></div>
<svg style="position:absolute;left:1240.5px;top:728px" width="13" height="13" viewBox="-1 -1 13 13"><g stroke="#2a2a2a" stroke-width="2.4" stroke-linecap="butt"><line x1="0.5" y1="0.5" x2="10" y2="10.5"/><line x1="10" y1="0.5" x2="0.5" y2="10.5"/></g></svg>
<svg style="position:absolute;left:1506.7px;top:728px" width="13" height="13" viewBox="-1 -1 13 13"><g stroke="#2a2a2a" stroke-width="2.4" stroke-linecap="butt"><line x1="0.5" y1="0.5" x2="10" y2="10.5"/><line x1="10" y1="0.5" x2="0.5" y2="10.5"/></g></svg>
<svg style="position:absolute;left:1838px;top:728px" width="13" height="13" viewBox="-1 -1 13 13"><g stroke="#2a2a2a" stroke-width="2.4" stroke-linecap="butt"><line x1="0.5" y1="0.5" x2="10" y2="10.5"/><line x1="10" y1="0.5" x2="0.5" y2="10.5"/></g></svg>
<div class="box" style="left:356px;top:1153px;width:1834px;height:205.5px;background:#f5f5f5"></div>
<div class="box" style="left:356px;top:1361.5px;width:1834px;height:212.5px;background:#ffffff"></div>
<div class="box" style="left:356px;top:1577px;width:1834px;height:206px;background:#f5f5f5"></div>
<div class="box" style="left:356px;top:1150px;width:1834px;height:3px;background:#b5b5b5"></div>
<div class="box" style="left:356px;top:1358.5px;width:1834px;height:3px;background:#b5b5b5"></div>
<div class="box" style="left:356px;top:1574px;width:1834px;height:3px;background:#b5b5b5"></div>
<div class="box" style="left:356px;top:1783px;width:1834px;height:3px;background:#b5b5b5"></div>
<div class="box btn" style="left:1907px;top:1181.2px;width:254.4px;height:54.8px"></div>
<svg style="position:absolute;left:1925px;top:1188.0px" width="40" height="40" viewBox="1925 1188 40 40">
<g fill="none" stroke="#fff" stroke-width="1.9" stroke-linecap="round">
<path d="M1941.6,1216.1 H1933.5 Q1931.5,1216.1 1931.5,1214.1 V1198.6 Q1931.5,1196.6 1933.5,1196.6 H1951.1 Q1953.1,1196.6 1953.1,1198.6 V1204.6"/>
<line x1="1931.5" y1="1202.3" x2="1953.1" y2="1202.3"/>
<line x1="1937.5" y1="1194" x2="1937.5" y2="1198.6"/><line x1="1947.4" y1="1194" x2="1947.4" y2="1198.6"/>
<circle cx="1953.3" cy="1216.2" r="8"/>
<line x1="1953.3" y1="1215.8" x2="1953.3" y2="1221"/>
</g><rect x="1952.3" y="1211.8" width="2.2" height="2.2" fill="#fff"/></svg>
<div class="box btn" style="left:1966.2px;top:1259px;width:195.2px;height:49px"></div>
<svg style="position:absolute;left:1986.5px;top:1267.5px" width="30" height="30" viewBox="1986.5 1267.5 30 30">
<polygon points="2001.50,1273.00 2004.44,1278.55 2010.63,1279.63 2006.26,1284.15 2007.14,1290.37 2001.50,1287.60 1995.86,1290.37 1996.74,1284.15 1992.37,1279.63 1998.56,1278.55" fill="none" stroke="#fff" stroke-width="2.4" stroke-linejoin="round"/></svg>
<svg style="position:absolute;left:804.75px;top:1293px" width="22" height="20" viewBox="0 0 22 20"><g fill="none" stroke="#208a6d" stroke-width="1.8" stroke-linecap="round" stroke-linejoin="round"><line x1="11" y1="0.8" x2="11" y2="17.8"/><polyline points="3.4,9.8 11,17.8 18.6,9.8"/></g></svg>
<div class="box btn" style="left:1966.2px;top:1389.8px;width:195.2px;height:49px"></div>
<svg style="position:absolute;left:1986.5px;top:1398.3px" width="30" height="30" viewBox="1986.5 1267.5 30 30">
<polygon points="2001.50,1273.00 2004.44,1278.55 2010.63,1279.63 2006.26,1284.15 2007.14,1290.37 2001.50,1287.60 1995.86,1290.37 1996.74,1284.15 1992.37,1279.63 1998.56,1278.55" fill="none" stroke="#fff" stroke-width="2.4" stroke-linejoin="round"/></svg>
<svg style="position:absolute;left:804.75px;top:1501.5px" width="22" height="20" viewBox="0 0 22 20"><g fill="none" stroke="#208a6d" stroke-width="1.8" stroke-linecap="round" stroke-linejoin="round"><line x1="11" y1="0.8" x2="11" y2="17.8"/><polyline points="3.4,9.8 11,17.8 18.6,9.8"/></g></svg>
<div class="box btn" style="left:1907px;top:1605.2px;width:254.4px;height:54.8px"></div>
<svg style="position:absolute;left:1925px;top:1612.0px" width="40" height="40" viewBox="1925 1188 40 40">
<g fill="none" stroke="#fff" stroke-width="1.9" stroke-linecap="round">
<path d="M1941.6,1216.1 H1933.5 Q1931.5,1216.1 1931.5,1214.1 V1198.6 Q1931.5,1196.6 1933.5,1196.6 H1951.1 Q1953.1,1196.6 1953.1,1198.6 V1204.6"/>
<line x1="1931.5" y1="1202.3" x2="1953.1" y2="1202.3"/>
<line x1="1937.5" y1="1194" x2="1937.5" y2="1198.6"/><line x1="1947.4" y1="1194" x2="1947.4" y2="1198.6"/>
<circle cx="1953.3" cy="1216.2" r="8"/>
<line x1="1953.3" y1="1215.8" x2="1953.3" y2="1221"/>
</g><rect x="1952.3" y="1211.8" width="2.2" height="2.2" fill="#fff"/></svg>
<div class="box btn" style="left:1966.2px;top:1683px;width:195.2px;height:49px"></div>
<svg style="position:absolute;left:1986.5px;top:1691.5px" width="30" height="30" viewBox="1986.5 1267.5 30 30">
<polygon points="2001.50,1273.00 2004.44,1278.55 2010.63,1279.63 2006.26,1284.15 2007.14,1290.37 2001.50,1287.60 1995.86,1290.37 1996.74,1284.15 1992.37,1279.63 1998.56,1278.55" fill="none" stroke="#fff" stroke-width="2.4" stroke-linejoin="round"/></svg>
<svg style="position:absolute;left:804.75px;top:1717px" width="22" height="20" viewBox="0 0 22 20"><g fill="none" stroke="#208a6d" stroke-width="1.8" stroke-linecap="round" stroke-linejoin="round"><line x1="11" y1="0.8" x2="11" y2="17.8"/><polyline points="3.4,9.8 11,17.8 18.6,9.8"/></g></svg>
<div class="t" style="left:406.0px;top:373.8px;font-size:32.40px;line-height:32.40px;color:#037397;font-weight:bold;letter-spacing:-2.25px">Filter schliessen</div>
<div class="t" style="left:741.0px;top:373.8px;font-size:32.40px;line-height:32.40px;color:#037397;font-weight:bold;letter-spacing:-1.89px">Filter zurücksetzen</div>
<div class="t" style="left:2061.5px;top:378.9px;font-size:32.00px;line-height:32.00px;color:#037397;font-weight:bold;letter-spacing:-1.38px">Merkliste</div>
<div class="t" style="left:357.0px;top:540.5px;font-size:31.50px;line-height:31.50px;color:#333333;-webkit-text-stroke:0.4px #333333;letter-spacing:-1.10px">Art der Veranstaltung</div>
<div class="t" style="left:976.0px;top:541.0px;font-size:31.50px;line-height:31.50px;color:#333333;-webkit-text-stroke:0.4px #333333;letter-spacing:-1.36px">Bundesländer</div>
<div class="t" style="left:1596.4px;top:541.0px;font-size:31.50px;line-height:31.50px;color:#333333;-webkit-text-stroke:0.4px #333333;letter-spacing:-1.00px">Schlagwörter</div>
<div class="t" style="left:355.0px;top:835.5px;font-size:31.50px;line-height:31.50px;color:#333333;-webkit-text-stroke:0.4px #333333;letter-spacing:-1.05px">Freitextsuche</div>
<div class="t" style="left:977.0px;top:836.0px;font-size:31.50px;line-height:31.50px;color:#333333;-webkit-text-stroke:0.4px #333333;letter-spacing:-1.30px">Termine ab</div>
<div class="t" style="left:1597.0px;top:836.0px;font-size:31.50px;line-height:31.50px;color:#333333;-webkit-text-stroke:0.4px #333333;letter-spacing:-1.11px">Termine bis</div>
<div class="t" style="left:383.4px;top:620.2px;font-size:31.50px;line-height:31.50px;color:#333333;-webkit-text-stroke:0.4px #333333;letter-spacing:-0.57px">- Alle -</div>
<div class="t" style="left:1002.6px;top:620.4px;font-size:31.50px;line-height:31.50px;color:#333333;-webkit-text-stroke:0.4px #333333;letter-spacing:-1.07px">Filter...</div>
<div class="t" style="left:1623.9px;top:620.4px;font-size:31.50px;line-height:31.50px;color:#333333;-webkit-text-stroke:0.4px #333333;letter-spacing:-1.07px">Filter...</div>
<div class="t" style="left:1008.0px;top:722.7px;font-size:22.20px;line-height:22.20px;color:#2a2a2a;-webkit-text-stroke:0.4px #2a2a2a;letter-spacing:-0.34px">Bundesweite Institution</div>
<div class="t" style="left:1300.3px;top:722.7px;font-size:22.20px;line-height:22.20px;color:#2a2a2a;-webkit-text-stroke:0.4px #2a2a2a;letter-spacing:-0.34px">Baden-Württemberg</div>
<div class="t" style="left:1628.3px;top:722.7px;font-size:22.20px;line-height:22.20px;color:#2a2a2a;-webkit-text-stroke:0.4px #2a2a2a;letter-spacing:-0.62px">Hochwasservorsorge</div>
<div class="t" style="left:1007.0px;top:912.8px;font-size:30.30px;line-height:30.30px;color:#333333;-webkit-text-stroke:0.4px #333333;letter-spacing:3.20px">08</div>
<div class="t" style="left:1046.0px;top:912.8px;font-size:30.30px;line-height:30.30px;color:#333333;-webkit-text-stroke:0.4px #333333">.</div>
<div class="t" style="left:1058.0px;top:912.8px;font-size:30.30px;line-height:30.30px;color:#333333;-webkit-text-stroke:0.4px #333333;letter-spacing:2.40px">09</div>
<div class="t" style="left:1096.4px;top:912.8px;font-size:30.30px;line-height:30.30px;color:#333333;-webkit-text-stroke:0.4px #333333">.</div>
<div class="t" style="left:1108.0px;top:912.8px;font-size:30.30px;line-height:30.30px;color:#333333;-webkit-text-stroke:0.4px #333333;letter-spacing:1.60px">2025</div>
<div class="t" style="left:1627.0px;top:912.8px;font-size:30.30px;line-height:30.30px;color:#333333;-webkit-text-stroke:0.4px #333333;letter-spacing:3.00px">28</div>
<div class="t" style="left:1666.0px;top:912.8px;font-size:30.30px;line-height:30.30px;color:#333333;-webkit-text-stroke:0.4px #333333">.</div>
<div class="t" style="left:1678.0px;top:912.8px;font-size:30.30px;line-height:30.30px;color:#333333;-webkit-text-stroke:0.4px #333333;letter-spacing:2.40px">09</div>
<div class="t" style="left:1716.4px;top:912.8px;font-size:30.30px;line-height:30.30px;color:#333333;-webkit-text-stroke:0.4px #333333">.</div>
<div class="t" style="left:1728.0px;top:912.8px;font-size:30.30px;line-height:30.30px;color:#333333;-webkit-text-stroke:0.4px #333333;letter-spacing:0.97px">2025</div>
<div class="t" style="left:384.0px;top:1187.0px;font-size:25.00px;line-height:25.00px;color:#037397;font-weight:bold;letter-spacing:-0.61px">15.09 – 19.09.2025</div>
<div class="t" style="left:383.5px;top:1234.4px;font-size:25.00px;line-height:25.00px;color:#a6c418;-webkit-text-stroke:0.4px #a6c418;letter-spacing:0.32px">Hybrid</div>
<div class="t" style="left:383.5px;top:1275.7px;font-size:25.00px;line-height:25.00px;color:#6e6e6e;-webkit-text-stroke:0.4px #6e6e6e;letter-spacing:-0.06px">Berlin</div>
<div class="t" style="left:701.5px;top:1185.5px;font-size:24.60px;line-height:24.60px;color:#037397;font-weight:bold;letter-spacing:-1.27px">Aktionswoche Gebäudegrün 2025</div>
<div class="t" style="left:702.5px;top:1249.0px;font-size:25.00px;line-height:25.00px;color:#6e6e6e;-webkit-text-stroke:0.4px #6e6e6e;letter-spacing:-1.05px">Veranstalter: Bundesverband GebäudeGrün e.V. - BuGG</div>
<div class="t" style="left:702.0px;top:1292.1px;font-size:20.60px;line-height:20.60px;color:#208a6d;-webkit-text-stroke:0.4px #208a6d;letter-spacing:-0.02px">mehr Infos</div>
<div class="t" style="left:1973.8px;top:1196.6px;font-size:21.00px;line-height:21.00px;color:#ffffff;-webkit-text-stroke:0.4px #ffffff;letter-spacing:0.12px">zur Veranstaltung</div>
<div class="t" style="left:2018.2px;top:1273.6px;font-size:21.00px;line-height:21.00px;color:#ffffff;-webkit-text-stroke:0.4px #ffffff;letter-spacing:0.12px">zur Merkliste</div>
<div class="t" style="left:384.0px;top:1395.5px;font-size:25.00px;line-height:25.00px;color:#037397;font-weight:bold;letter-spacing:-0.29px">15.09.2025</div>
<div class="t" style="left:384.0px;top:1429.5px;font-size:25.00px;line-height:25.00px;color:#037397;font-weight:bold;letter-spacing:-0.59px">19:30 - 21:00</div>
<div class="t" style="left:383.5px;top:1476.9px;font-size:25.00px;line-height:25.00px;color:#7cc6dc;-webkit-text-stroke:0.4px #7cc6dc;letter-spacing:-0.92px">Präsenz</div>
<div class="t" style="left:383.5px;top:1518.2px;font-size:25.00px;line-height:25.00px;color:#6e6e6e;-webkit-text-stroke:0.4px #6e6e6e;letter-spacing:-0.50px">Isny</div>
<div class="t" style="left:700.5px;top:1394.0px;font-size:24.60px;line-height:24.60px;color:#037397;font-weight:bold;letter-spacing:-1.34px">Blaues Isny - Umgang mit Starkregen, Hochwasser und Trockenheit</div>
<div class="t" style="left:702.5px;top:1457.5px;font-size:25.00px;line-height:25.00px;color:#6e6e6e;-webkit-text-stroke:0.4px #6e6e6e;letter-spacing:-0.50px">Veranstalter: Bündnis 90/Die Grünen Ortsverband Isny/Argenbühl</div>
<div class="t" style="left:702.0px;top:1500.6px;font-size:20.60px;line-height:20.60px;color:#208a6d;-webkit-text-stroke:0.4px #208a6d;letter-spacing:-0.02px">mehr Infos</div>
<div class="t" style="left:2018.2px;top:1404.1px;font-size:21.00px;line-height:21.00px;color:#ffffff;-webkit-text-stroke:0.4px #ffffff;letter-spacing:0.12px">zur Merkliste</div>
<div class="t" style="left:384.0px;top:1611.0px;font-size:25.00px;line-height:25.00px;color:#037397;font-weight:bold;letter-spacing:-0.56px">16.09 – 19.09.2025</div>
<div class="t" style="left:383.5px;top:1658.4px;font-size:25.00px;line-height:25.00px;color:#7cc6dc;-webkit-text-stroke:0.4px #7cc6dc;letter-spacing:-0.92px">Präsenz</div>
<div class="t" style="left:383.5px;top:1699.7px;font-size:25.00px;line-height:25.00px;color:#6e6e6e;-webkit-text-stroke:0.4px #6e6e6e;letter-spacing:-0.25px">Heilbronn</div>
<div class="t" style="left:701.5px;top:1609.5px;font-size:24.60px;line-height:24.60px;color:#037397;font-weight:bold;letter-spacing:-1.68px">Alles im Fluss!? Wasser in der Krise</div>
<div class="t" style="left:702.5px;top:1673.0px;font-size:25.00px;line-height:25.00px;color:#6e6e6e;-webkit-text-stroke:0.4px #6e6e6e;letter-spacing:-0.49px">Veranstalter: Stadt Heilbronn</div>
<div class="t" style="left:702.0px;top:1716.1px;font-size:20.60px;line-height:20.60px;color:#208a6d;-webkit-text-stroke:0.4px #208a6d;letter-spacing:-0.02px">mehr Infos</div>
<div class="t" style="left:1973.8px;top:1620.6px;font-size:21.00px;line-height:21.00px;color:#ffffff;-webkit-text-stroke:0.4px #ffffff;letter-spacing:0.12px">zur Veranstaltung</div>
<div class="t" style="left:2018.2px;top:1697.6px;font-size:21.00px;line-height:21.00px;color:#ffffff;-webkit-text-stroke:0.4px #ffffff;letter-spacing:0.12px">zur Merkliste</div>

</body></html>
